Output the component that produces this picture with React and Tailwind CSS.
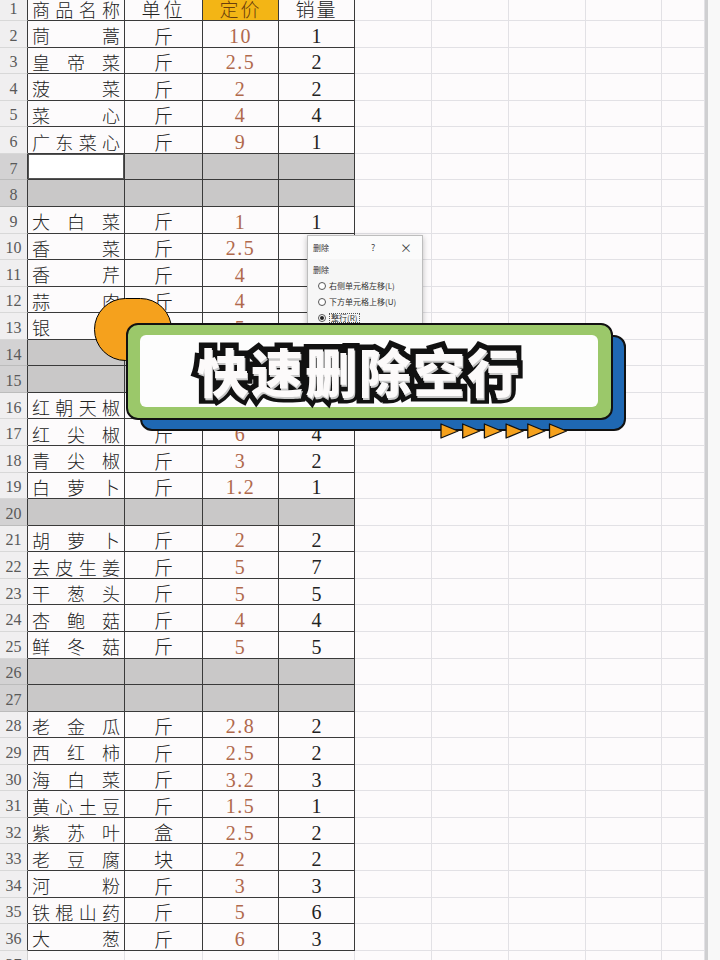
import React from "react";
import clsx from "clsx";

const CJK = "font-['Noto_Sans_CJK_SC',sans-serif]";
const SERIF = "font-['Liberation_Serif','Noto_Sans_CJK_SC',serif]";

const data = [
  [1, "商品名称", "单位", "定价", "销量"],
  [2, "茼蒿", "斤", "10", "1"],
  [3, "皇帝菜", "斤", "2.5", "2"],
  [4, "菠菜", "斤", "2", "2"],
  [5, "菜心", "斤", "4", "4"],
  [6, "广东菜心", "斤", "9", "1"],
  [7],
  [8],
  [9, "大白菜", "斤", "1", "1"],
  [10, "香菜", "斤", "2.5", "2"],
  [11, "香芹", "斤", "4", "3"],
  [12, "蒜肉", "斤", "4", "2"],
  [13, "银耳", "斤", "5", "1"],
  [14],
  [15],
  [16, "红朝天椒", "斤", "8", "2"],
  [17, "红尖椒", "斤", "6", "4"],
  [18, "青尖椒", "斤", "3", "2"],
  [19, "白萝卜", "斤", "1.2", "1"],
  [20],
  [21, "胡萝卜", "斤", "2", "2"],
  [22, "去皮生姜", "斤", "5", "7"],
  [23, "干葱头", "斤", "5", "5"],
  [24, "杏鲍菇", "斤", "4", "4"],
  [25, "鲜冬菇", "斤", "5", "5"],
  [26],
  [27],
  [28, "老金瓜", "斤", "2.8", "2"],
  [29, "西红柿", "斤", "2.5", "2"],
  [30, "海白菜", "斤", "3.2", "3"],
  [31, "黄心土豆", "斤", "1.5", "1"],
  [32, "紫苏叶", "盒", "2.5", "2"],
  [33, "老豆腐", "块", "2", "2"],
  [34, "河粉", "斤", "3", "3"],
  [35, "铁棍山药", "斤", "5", "6"],
  [36, "大葱", "斤", "6", "3"],
  [37, ""],
];

const lightCols = ["w-[77px]", "w-[77px]", "w-[77px]", "w-[76px]", "w-[43px]"];

const Row = ({ row }) => {
  const [n, name, unit, price, qty] = row;
  const blank = row.length === 1;
  const inTable = n <= 36;
  const head = n === 1;
  const dark = inTable ? "border-b-[#3a3a3a] border-r-[#3a3a3a]" : "border-b-[#e2e1e5] border-r-[#e2e1e5]";
  const fill = blank ? "bg-[#c9c8c8]" : "";
  return (
    <div className="flex h-[26.57px] shrink-0">
      <div
        className={clsx(
          "w-[28px] shrink-0 flex items-center justify-center pt-[4px] border-b border-r text-[16px] text-[#595959]",
          SERIF,
          blank ? "bg-[#d3d2d3] border-b-[#bcbcbc]" : "bg-[#f0eff0] border-b-[#d8d8d8]",
          inTable ? "border-r-[#3a3a3a]" : "border-r-[#d0d0d0]"
        )}
      >
        {n}
      </div>
      <div
        className={clsx(
          "w-[97px] shrink-0 flex items-center justify-between px-[4px] pt-[4px] border-b border-r text-[18px] font-light text-[#222]",
          CJK,
          dark,
          n === 7 ? "bg-white shadow-[inset_0_0_0_1px_#555]" : fill
        )}
      >
        {!blank && name && name.split("").map((ch, i) => <span key={i}>{ch}</span>)}
      </div>
      <div className={clsx("w-[78px] shrink-0 flex items-center justify-center pt-[4px] border-b border-r text-[19px] font-light text-[#222]", CJK, dark, fill)}>
        {head ? <span className="tracking-[3px]">{unit}</span> : unit}
      </div>
      <div
        className={clsx(
          "w-[76px] shrink-0 flex items-center justify-center pt-[4px] border-b border-r",
          dark,
          head ? clsx("bg-[#f3b515] text-[19px] font-light text-[#6a3e0c] tracking-[2px]", CJK) : clsx("text-[20px] text-[#b0694c] tracking-[1.5px]", SERIF),
          fill
        )}
      >
        {price}
      </div>
      <div
        className={clsx(
          "w-[76px] shrink-0 flex items-center justify-center pt-[4px] border-b border-r text-[#222]",
          dark,
          head ? clsx("text-[19px] font-light tracking-[2px]", CJK) : clsx("text-[20px]", SERIF),
          fill
        )}
      >
        {qty}
      </div>
      {lightCols.map((w, i) => (
        <div key={i} className={clsx(w, "shrink-0 border-b border-r border-b-[#e2e1e5] border-r-[#e2e1e5]")} />
      ))}
      <div className="w-[15px] shrink-0 border-l-[3px] border-l-[#cfcfd1] bg-[#f8f8f8]" />
    </div>
  );
};

const Dialog = () => (
  <div className={clsx("absolute left-[307px] top-[235px] w-[116px] h-[100px] bg-[#f6f6f6] border border-[#bdbdbd] shadow-[0_2px_6px_rgba(0,0,0,0.25)] text-[8px] text-[#333]", CJK)}>
    <div className="h-[23px] flex items-center pl-[5px] pr-[10px] bg-[#fbfbfb]">
      <span>删除</span>
      <span className="ml-[42px] text-[9px] text-[#444]">?</span>
      <span className="ml-auto text-[12px] leading-none text-[#444]">×</span>
    </div>
    <div className="pl-[5px] pt-[6px]">
      <div className="h-[10px] leading-[10px]">删除</div>
      <div className="mt-[6px] flex flex-col gap-[6px] pl-[5px]">
        {["右侧单元格左移(L)", "下方单元格上移(U)", "整行(R)"].map((t, i) => (
          <div key={i} className="flex items-center gap-[3px] h-[10px]">
            <span className="w-[8px] h-[8px] rounded-full border border-[#555] bg-white flex items-center justify-center">
              {i === 2 && <span className="w-[4px] h-[4px] rounded-full bg-[#222]" />}
            </span>
            <span className={i === 2 ? "border border-dotted border-[#555] px-[1px] leading-[8px]" : ""}>{t}</span>
          </div>
        ))}
      </div>
    </div>
  </div>
);

const Banner = () => (
  <>
    <div className="absolute left-[94px] top-[298px] w-[78px] h-[63px] rounded-full bg-[#f5a11d] border-[1.5px] border-black" />
    <div className="absolute left-[140px] top-[335px] w-[486px] h-[96px] rounded-[12px] bg-[#1f68b3] border-2 border-[#111]" />
    <div className="absolute left-[126px] top-[323px] w-[487px] h-[97px] rounded-[12px] bg-[#9bc86a] border-2 border-[#111] pl-[12px] pt-[10px] pr-[13px] pb-[11px]">
      <div className="h-full rounded-[6px] bg-[#fdfdfd] flex items-center justify-center pr-[20px]">
        <div className={clsx("relative text-[52px] font-black leading-none tracking-[2px]", CJK)}>
          <span className="text-[#111] [-webkit-text-stroke:11px_#111]">快速删除空行</span>
          <span className="absolute left-0 top-0 text-[#fcfafa] [text-shadow:1px_2px_0_#c8c8c8]">快速删除空行</span>
        </div>
      </div>
    </div>
    <svg className="absolute left-[439px] top-[422px]" width="134" height="18" viewBox="0 0 134 18">
      {[0, 1, 2, 3, 4, 5].map((i) => (
        <path
          key={i}
          d={`M${2 + i * 21.7} 2 L${19 + i * 21.7} 9 L${2 + i * 21.7} 16 Z`}
          fill="#f5a11d"
          stroke="#111"
          strokeWidth="1.3"
          strokeLinejoin="round"
        />
      ))}
    </svg>
  </>
);

export default function App() {
  return (
    <div className="relative w-[720px] h-[960px] overflow-hidden bg-[#fdfbfc]">
      <div className="flex flex-col -mt-[5.57px]">
        {data.map((row) => (
          <Row key={row[0]} row={row} />
        ))}
      </div>
      <Dialog />
      <Banner />
    </div>
  );
}
